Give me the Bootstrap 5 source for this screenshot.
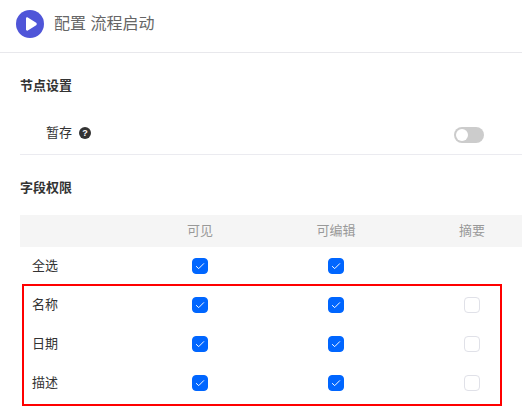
<!DOCTYPE html>
<html lang="zh-CN">
<head>
    <meta charset="UTF-8">
    <meta name="viewport" content="width=device-width, initial-scale=1.0">
    <title>配置 流程启动</title>
    <link href="https://cdn.jsdelivr.net/npm/bootstrap@5.3.3/dist/css/bootstrap.min.css" rel="stylesheet">
    <style>
        html, body {
            height: 416px;
            overflow: hidden;
        }

        body {
            font-family: "Liberation Sans", "Noto Sans CJK SC", sans-serif;
            font-size: 13px;
            color: #333;
        }

        .page-head {
            height: 53px;
            padding: 0 0 5px 16px;
            border-bottom: 1px solid #e8e8ec;
        }

        .page-title {
            font-size: 16px;
            color: #666;
            margin: 0 0 0 10px;
            font-weight: 400;
        }

        .page-body {
            padding-left: 20px;
            width: 540px;
        }

        .sec-title {
            font-size: 13px;
            font-weight: 700;
            color: #333;
            margin: 0;
            line-height: 20px;
        }

        .setting-row {
            height: 44px;
            margin-top: 15px;
            padding: 1px 56px 0 26px;
            border-bottom: 1px solid #ebebf0;
        }

        .help-dot {
            width: 12px;
            height: 12px;
            border-radius: 50%;
            background: #333;
            color: #fff;
            font-size: 9px;
            font-weight: 700;
            line-height: 12px;
            text-align: center;
            margin: -1px 0 0 7px;
        }

        .form-check-input.pin-switch {
            width: 30px;
            height: 16px;
            margin: 4px 0 0 auto;
            border: 0;
            border-radius: 8px;
            background-color: #ccc;
            background-position: left 2px center;
            background-size: 12px 12px;
            background-image: url("data:image/svg+xml,%3csvg xmlns='http://www.w3.org/2000/svg' viewBox='0 0 12 12'%3e%3ccircle cx='6' cy='6' r='6' fill='%23fff'/%3e%3c/svg%3e");
        }

        .perm-wrap {
            position: relative;
        }

        .perm-table {
            table-layout: fixed;
            width: 520px;
            margin: 0;
            font-size: 13px;
        }

        .perm-table th, .perm-table td {
            border: 0;
            padding: 0;
            text-align: center;
            vertical-align: middle;
            color: #333;
            background: transparent;
            box-shadow: none;
        }

        .perm-table th {
            height: 32px;
            font-weight: 400;
            color: #999;
            background: #f5f5f5;
        }

        .perm-table td {
            height: 39px;
            padding-bottom: 1px;
        }

        .perm-table .name-col {
            width: 112px;
            text-align: left;
            padding-left: 12px;
        }

        .perm-table .form-check-input {
            display: block;
            width: 16px;
            height: 16px;
            margin: 0 auto;
            border-radius: 4px;
            opacity: 1;
            border: 1px solid #e0e1e8;
            background-color: #fff;
        }

        .perm-table .form-check-input:checked {
            background-color: #0066ff;
            border-color: #0066ff;
            background-image: url("data:image/svg+xml,%3csvg xmlns='http://www.w3.org/2000/svg' viewBox='0 0 16 16'%3e%3cpath fill='none' stroke='%23fff' stroke-width='1.1' d='M3.5 8.2l3 2.800 6-6'/%3e%3c/svg%3e");
        }

        .red-frame {
            position: absolute;
            left: 2px;
            top: 69px;
            width: 480px;
            height: 122px;
            border: 2px solid #f00;
            pointer-events: none;
        }
    </style>
</head>
<body>

    <div class="page-head d-flex align-items-center">
        <svg width="28" height="28" viewBox="0 0 28 28">
            <circle cx="14" cy="14" r="14" fill="#4f55d8"/>
            <path d="M10 8.500c0-.9 1-1.500 1.800-1l8.400 5.300c.7.500.7 1.900 0 2.400l-8.400 5.300c-.8.500-1.800-.1-1.800-1z" fill="#fff"/>
        </svg>
        <h1 class="page-title">配置 流程启动</h1>
    </div>

    <div class="page-body">
        <h2 class="sec-title" style="margin-top:23px">节点设置</h2>

        <div class="setting-row d-flex align-items-center">
            <span>暂存</span>
            <span class="help-dot">?</span>
            <input class="form-check-input pin-switch" type="checkbox" role="switch" disabled style="opacity:1">
        </div>

        <h2 class="sec-title" style="margin-top:23px;margin-bottom:17px">字段权限</h2>

        <div class="perm-wrap">
            <table class="table perm-table">
                <thead>
                    <tr><th class="name-col"></th><th>可见</th><th>可编辑</th><th>摘要</th></tr>
                </thead>
                <tbody id="perm-rows"></tbody>
            </table>
            <div class="red-frame"></div>
        </div>
    </div>

    <script>
        const rows = [
            { name: "全选", summary: false },
            { name: "名称", summary: true },
            { name: "日期", summary: true },
            { name: "描述", summary: true }
        ];

        const tbody = document.getElementById("perm-rows");
        rows.forEach(row => {
            const tr = document.createElement("tr");
            tr.innerHTML = `
                <td class="name-col">${row.name}</td>
                <td><input class="form-check-input" type="checkbox" checked></td>
                <td><input class="form-check-input" type="checkbox" checked></td>
                <td>${row.summary ? '<input class="form-check-input" type="checkbox">' : ""}</td>
            `;
            tbody.appendChild(tr);
        });
    </script>
    <script src="https://cdn.jsdelivr.net/npm/bootstrap@5.3.3/dist/js/bootstrap.bundle.min.js"></script>
</body>
</html>
